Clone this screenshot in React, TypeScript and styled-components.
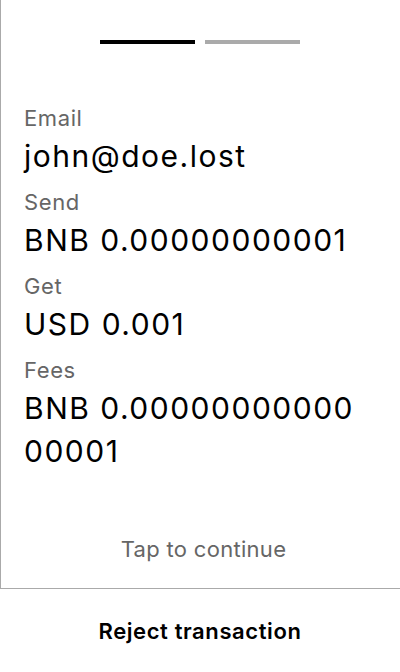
import React from "react";
import styled, { createGlobalStyle } from "styled-components";

const GlobalStyle = createGlobalStyle`
  html, body {
    margin: 0;
    padding: 0;
    background: #fff;
  }
  body {
    font-family: Inter, "Noto Sans", sans-serif;
  }
`;

const Screen = styled.div`
  box-sizing: border-box;
  width: 400px;
  height: 672px;
  border-left: 1px solid #aaaaaa;
  display: flex;
  flex-direction: column;
  background: #fff;
`;

const Steps = styled.div`
  display: flex;
  justify-content: center;
  gap: 10px;
  padding-top: 40px;
  margin-left: -1px;
`;

const Step = styled.div<{ $active?: boolean }>`
  width: 95px;
  height: 4px;
  background: ${(p) => (p.$active ? "#000" : "#aaaaaa")};
`;

const Details = styled.div`
  flex: 1;
  padding: 57px 24px 0 23px;
`;

const Label = styled.div`
  font-size: 22px;
  line-height: 34px;
  letter-spacing: 0.6px;
  color: #666;
`;

const Value = styled.div`
  max-width: 338px;
  font-size: 30px;
  line-height: 43px;
  letter-spacing: 1.5px;
  color: #000;
  margin-bottom: 7px;
  word-break: break-all;
`;

const Hint = styled.div`
  text-align: center;
  font-size: 22px;
  letter-spacing: 0.3px;
  color: #666;
  padding: 0 0 26px 6px;
`;

const Footer = styled.button`
  border: 0;
  border-top: 1px solid #aaaaaa;
  margin-left: -1px;
  height: 84px;
  background: #fff;
  font-family: Inter, "Noto Sans", sans-serif;
  font-size: 22px;
  font-weight: 600;
  letter-spacing: 0.6px;
  color: #000;
  cursor: pointer;
`;

const rows = [
  { label: "Email", value: "john@doe.lost" },
  { label: "Send", value: "BNB 0.00000000001" },
  { label: "Get", value: "USD 0.001" },
  { label: "Fees", value: "BNB 0.0000000000000001" },
];

export default function App() {
  return (
    <>
      <GlobalStyle />
      <Screen>
        <Steps>
          <Step $active />
          <Step />
        </Steps>
        <Details>
          {rows.map((r) => (
            <React.Fragment key={r.label}>
              <Label>{r.label}</Label>
              <Value>{r.value}</Value>
            </React.Fragment>
          ))}
        </Details>
        <Hint>Tap to continue</Hint>
        <Footer>Reject transaction</Footer>
      </Screen>
    </>
  );
}
